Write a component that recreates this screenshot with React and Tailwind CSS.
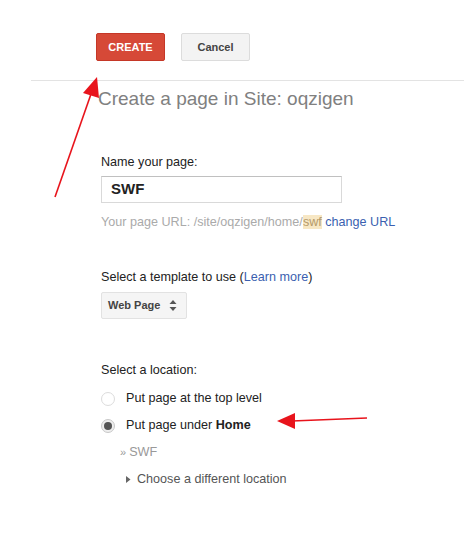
import React from 'react'

const App = () => {
  return (
    <div className="relative w-[474px] h-[544px] bg-white overflow-hidden font-['Liberation_Sans',Arial,sans-serif]">
      {/* ── Action buttons */}
      <div className="flex gap-[16px] pt-[33px] pl-[96px]">
        <button className="w-[69px] h-[28px] rounded-[2px] bg-[#d64937] border border-[#c53727] text-white text-[11px] font-bold">
          CREATE
        </button>
        <button className="w-[69px] h-[28px] rounded-[2px] bg-[#f3f3f3] border border-[#dcdcdc] text-[#444] text-[11px] font-bold">
          Cancel
        </button>
      </div>

      <div className="mt-[19px] ml-[31px] w-[433px] h-px bg-[#e3e3e3]" />

      <div className="pl-[98px]">
        <h1 className="mt-[7px] text-[19px] leading-[22px] text-[#808080]">
          Create a page in Site: oqzigen
        </h1>

        <div className="pl-[3px]">
          {/* ── Page name */}
          <div className="mt-[44px] text-[12.6px] leading-[16px] text-[#222]">Name your page:</div>
          <div className="mt-[6px] w-[241px] h-[27px] border border-[#d9d9d9] border-t-[#c0c0c0] flex items-center pl-[9px] text-[15px] font-bold text-[#222]">
            SWF
          </div>
          <div className="mt-[11px] text-[12.6px] leading-[16px] text-[#aaa]">
            Your page URL: /site/oqzigen/home/
            <span className="bg-[#f7e7c4] text-[#b59a6a]">swf</span>{' '}
            <span className="text-[#3b5fb0]">change URL</span>
          </div>

          {/* ── Template */}
          <div className="mt-[39px] text-[12.6px] leading-[16px] text-[#222]">
            Select a template to use (<span className="text-[#3b5fb0]">Learn more</span>)
          </div>
          <div className="mt-[7px] w-[86px] h-[27px] rounded-[2px] bg-[#f5f5f5] border border-[#e2e2e2] flex items-center pl-[6px] text-[11px] font-bold text-[#444]">
            <span>Web Page</span>
            <svg width="8" height="11" viewBox="0 0 8 11" className="ml-[9px]">
              <path d="M4 0 L7.5 4 L0.5 4 Z M4 11 L7.5 7 L0.5 7 Z" fill="#555" />
            </svg>
          </div>

          {/* ── Location */}
          <div className="mt-[43px] text-[12.6px] leading-[16px] text-[#222]">Select a location:</div>
          <div className="mt-[7px]">
            <div className="h-[27px] flex items-center text-[12.6px] text-[#222]">
              <span className="w-[14px] h-[14px] rounded-full border border-[#dcdcdc] bg-white" />
              <span className="ml-[11px]">Put page at the top level</span>
            </div>
            <div className="h-[27px] flex items-center text-[12.6px] text-[#222]">
              <span className="w-[14px] h-[14px] rounded-full border border-[#c8c8c8] bg-[#eee] flex items-center justify-center">
                <span className="w-[8px] h-[8px] rounded-full bg-[#555]" />
              </span>
              <span className="ml-[11px]">
                Put page under <b>Home</b>
              </span>
            </div>
            <div className="h-[27px] flex items-center pl-[19px] text-[12.6px] text-[#999]">
              <span className="text-[11px] mr-[3px]">»</span>
              <span>SWF</span>
            </div>
            <div className="h-[27px] flex items-center pl-[25px] text-[12.6px] text-[#555]">
              <svg width="5" height="7" viewBox="0 0 5 7" className="mr-[6px]">
                <path d="M0 0 L4.5 3.5 L0 7 Z" fill="#666" />
              </svg>
              <span>Choose a different location</span>
            </div>
          </div>
        </div>
      </div>

      {/* ── Red annotation arrows */}
      <svg className="absolute left-0 top-0 pointer-events-none" width="474" height="544">
        <line x1="55" y1="197" x2="91" y2="94" stroke="#e8141c" strokeWidth="1.6" />
        <polygon points="97,77 99,98 83,93" fill="#e8141c" />
        <line x1="367" y1="418" x2="292" y2="421" stroke="#e8141c" strokeWidth="1.6" />
        <polygon points="277,421 295,413 295,429" fill="#e8141c" />
      </svg>
    </div>
  )
}

export default App
